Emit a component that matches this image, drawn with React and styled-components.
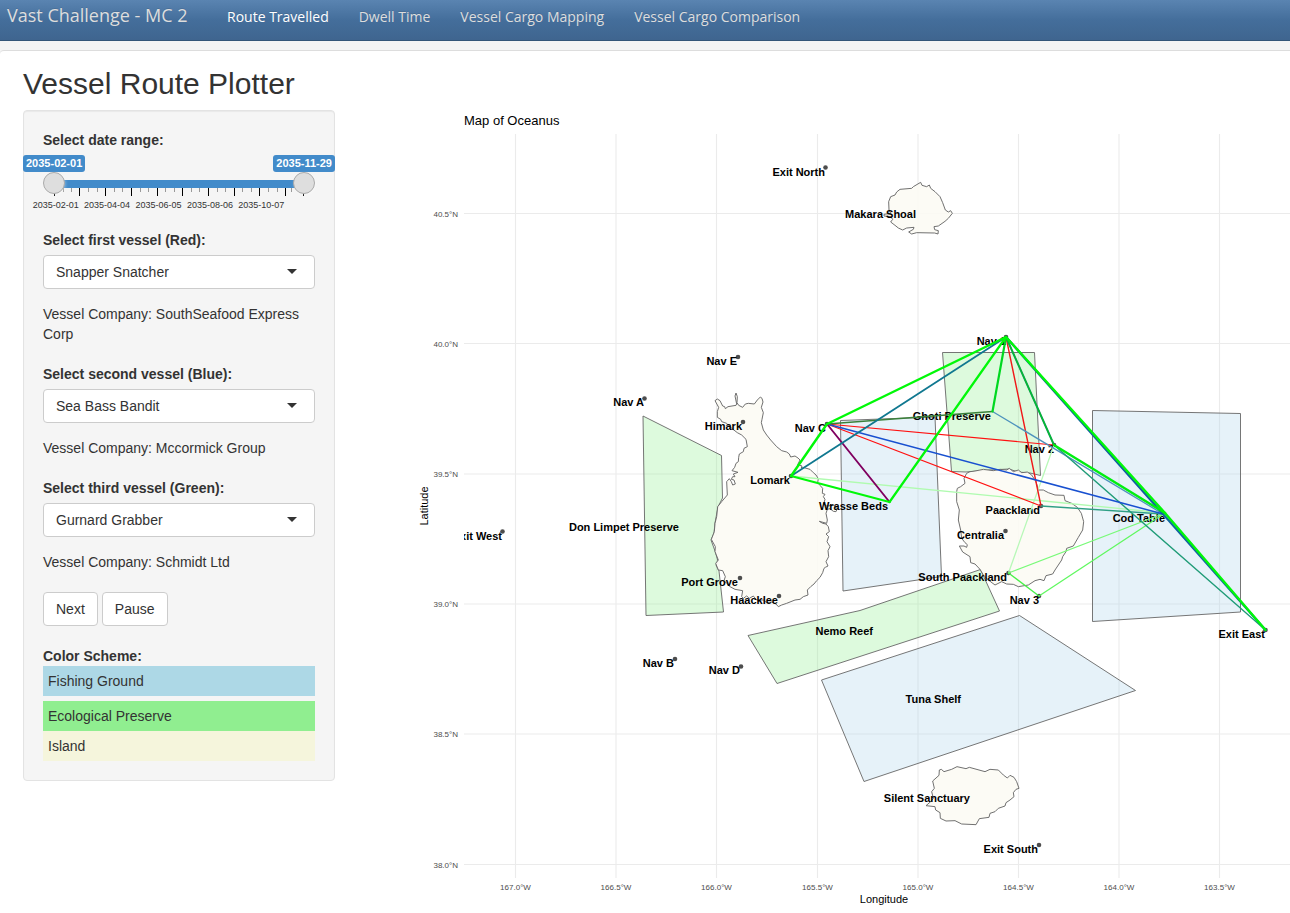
import React, { useState } from "react";
import styled, { createGlobalStyle } from "styled-components";

const GlobalStyle = createGlobalStyle`
  *, *::before, *::after { box-sizing: border-box; }
  body {
    margin: 0;
    background: #fff;
    color: #333;
    font: 14px/20px "Liberation Sans", Arial, sans-serif;
  }
`;

const NavBar = styled.nav`
  display: flex;
  height: 41px;
  padding-left: 7px;
  border-bottom: 1px solid #345578;
  background: linear-gradient(#5a84b1, #446e9b 50%, #3f658f);
  font-family: "Open Sans", sans-serif;
`;

const Brand = styled.a`
  width: 205px;
  padding-top: 5px;
  color: #ddd;
  font-size: 18px;
  text-decoration: none;
  text-shadow: 0 -1px 0 rgba(0, 0, 0, 0.1);
`;

const NavLink = styled.a`
  padding: 7px 15px 0;
  color: ${(p) => (p.$active ? "#fff" : "#ddd")};
  text-decoration: none;
  text-shadow: 0 -1px 0 rgba(0, 0, 0, 0.1);
`;

const Band = styled.div`
  height: 13px;
  margin-bottom: -4px;
  background: #f4f4f4;
`;

const Page = styled.main`
  border-top: 1px solid #ddd;
  border-top-left-radius: 4px;
  background: #fff;
  padding-left: 23px;
`;

const Title = styled.h2`
  margin: 0;
  padding: 16px 0 10px;
  font-size: 30px;
  line-height: 33px;
  font-weight: 400;
`;

const Columns = styled.div`
  display: flex;
  align-items: flex-start;
  gap: 75px;
`;

const Sidebar = styled.form`
  flex: 0 0 312px;
  padding: 19px;
  border: 1px solid #e3e3e3;
  border-radius: 4px;
  background: #f5f5f5;
  box-shadow: inset 0 1px 1px rgba(0, 0, 0, 0.05);
`;

const Label = styled.label`
  display: block;
  margin-bottom: 5px;
  font-weight: 700;
`;

const Slider = styled.fieldset`
  height: 100px;
  margin: 0;
  padding: 0;
  border: 0;
`;

const Legend = styled.legend`
  padding: 0;
  font-weight: 700;
`;

const Flags = styled.div`
  display: flex;
  justify-content: space-between;
  margin: 5px -20px 0;
`;

const Flag = styled.output`
  padding: 0 3px;
  border-radius: 3px;
  background: #428bca;
  color: #fff;
  font-size: 11px;
  font-weight: 700;
  line-height: 17px;
`;

const Track = styled.div`
  position: relative;
  height: 21px;
  background: linear-gradient(#428bca, #428bca) center 8px / calc(100% - 22px) 8px no-repeat;
`;

const Thumb = styled.input`
  position: absolute;
  inset: 0;
  width: 100%;
  height: 22px;
  margin: 0;
  appearance: none;
  background: none;
  pointer-events: none;

  &::-webkit-slider-thumb {
    appearance: none;
    width: 22px;
    height: 22px;
    border: 1px solid #aaa;
    border-radius: 50%;
    background: #dedede;
    box-shadow: 1px 1px 3px rgba(255, 255, 255, 0.3);
    pointer-events: auto;
  }
`;

const Ticks = styled.svg`
  display: block;
  width: 100%;
  height: 12px;
  margin-top: -6px;
`;

const TickLabels = styled.div`
  display: flex;
  width: 257px;
  margin: -1px 0 0 -13px;
  font-size: 9px;
  line-height: 14px;

  span {
    flex: 1;
    text-align: center;
  }
`;

const Field = styled.div`
  margin-bottom: 20px;
`;

const SelectBox = styled.div`
  position: relative;
  margin-bottom: 15px;

  &::after {
    content: "";
    position: absolute;
    top: 14px;
    right: 18px;
    border: 5px solid transparent;
    border-top-color: #333;
    border-bottom: 0;
    pointer-events: none;
  }
`;

const Select = styled.select`
  display: block;
  width: 100%;
  height: 34px;
  padding: 0 12px;
  border: 1px solid #ccc;
  border-radius: 4px;
  appearance: none;
  background: #fff;
  color: #333;
  font: inherit;
`;

const Company = styled.p`
  margin: 0;
`;

const Buttons = styled.div`
  display: flex;
  gap: 4px;
  margin-bottom: 20px;
`;

const Button = styled.button`
  height: 34px;
  padding: 0 12px;
  border: 1px solid #ccc;
  border-radius: 4px;
  background: #fff;
  color: #333;
  font: inherit;
`;

const Scheme = styled.strong`
  display: block;
`;

const Swatch = styled.div`
  padding: 5px;
  margin-bottom: ${(p) => p.$gap || 0}px;
  background: ${(p) => p.$color};
`;

const Plot = styled.svg`
  display: block;
  flex: 1;
  min-width: 0;
  font-family: "Liberation Sans", Arial, sans-serif;
`;

const AxisText = styled.text`
  font-size: 8px;
  fill: #4d4d4d;
`;

const AxisTitle = styled.text`
  font-size: 11px;
  fill: #000;
`;

const PlaceName = styled.text`
  font-size: 11px;
  font-weight: 700;
  text-anchor: end;
  fill: #000;
`;

const VESSELS = [
  { order: "first", color: "Red", name: "Snapper Snatcher", company: "SouthSeafood Express Corp" },
  { order: "second", color: "Blue", name: "Sea Bass Bandit", company: "Mccormick Group" },
  { order: "third", color: "Green", name: "Gurnard Grabber", company: "Schmidt Ltd" },
];

const TABS = ["Route Travelled", "Dwell Time", "Vessel Cargo Mapping", "Vessel Cargo Comparison"];
const DATES = ["2035-02-01", "2035-04-04", "2035-06-05", "2035-08-06", "2035-10-07"];
const MAJOR_TICKS = [11, 36, 62, 88, 114, 139, 165, 191, 216, 242, 260];
const MINOR_TICKS = [20, 28, 45, 54, 71, 79, 97, 105, 122, 131, 148, 156, 174, 182, 199, 208, 225, 234, 248];

const LONGITUDES = [
  [515.5, "167.0°W"], [616, "166.5°W"], [716.5, "166.0°W"], [817.5, "165.5°W"],
  [918, "165.0°W"], [1018.5, "164.5°W"], [1119, "164.0°W"], [1219.5, "163.5°W"],
];
const LATITUDES = [
  [213.5, "40.5°N"], [343.5, "40.0°N"], [474, "39.5°N"], [604, "39.0°N"], [734, "38.5°N"], [864.5, "38.0°N"],
];

const PRESERVES = [
  "643,416 721.5,455.5 722.5,498 718,507 715,523 714,533 711,540 715,551 718,561 716,565 719,571 723.5,612 646,615.5",
  "942.5,352.5 1034.5,352.5 1040.5,475.5 1030,473 1018,472 1009,469 990,470 966,472 951.5,471.5",
  "748,635.5 860,610.5 980.5,569.5 999.5,611 777,683.5",
];
const GROUNDS = [
  "840.5,420.5 935,417 941.5,576.5 843,591",
  "1092.5,410.5 1240.5,413.5 1240.5,612 1092.5,621.5",
  "821.5,680 1019.5,615.5 1135.5,690.5 864,781.5",
];

const ISLANDS = [
  {
    x: 600, y: 380,
    points: "345,62 352,57 360,62 368,78 374,80 376,86 384,80 408,76 410,72 405,48 408,39 412,50 411,68 416,76 428,82 436,72 445,70 463,72 472,60 481,51 486,55 489,66 484,82 490,98 486,118 484,128 490,150 500,165 512,180 530,200 545,212 560,216 568,222 572,231 585,228 594,234 600,240 593,254 606,258 604,264 612,263 630,268 640,278 648,285 655,296 653,308 660,316 668,325 667,340 675,343 670,350 675,358 671,372 680,378 700,376 712,386 708,395 700,394 690,386 682,388 678,400 682,420 680,430 658,424 668,430 678,432 685,440 688,455 678,462 686,470 681,485 690,500 684,512 686,530 678,545 684,558 676,562 672,565 668,578 660,592 650,602 642,612 632,620 622,630 624,645 610,650 600,658 585,660 560,670 545,675 535,680 528,672 515,666 500,668 490,660 470,660 460,648 448,655 440,648 430,655 425,650 428,632 405,628 390,620 380,610 372,602 376,590 368,572 355,570 347,550 355,540 345,515 346,500 334,478 343,455 345,430 350,410 353,380 365,365 382,345 380,305 388,296 394,305 398,315 406,312 402,300 394,298 398,290 405,290 400,282 414,277 396,272 404,262 408,250 415,245 416,232 418,222 430,215 432,205 442,200 438,178 425,165 412,158 395,145 380,130 365,125 362,118 352,112 352,95 356,82",
  },
  {
    x: 940, y: 460,
    points: "50,95 52,85 62,80 75,70 72,55 80,40 90,35 105,33 130,28 160,32 180,28 200,30 208,25 220,35 235,30 245,38 262,36 275,45 288,65 295,90 310,90 325,98 345,105 372,106 375,122 395,130 412,142 424,160 431,185 428,210 415,232 400,258 380,265 378,275 368,290 365,300 355,315 345,330 338,342 318,347 312,362 300,358 285,362 265,375 235,380 220,373 200,372 185,365 165,375 145,360 130,345 120,328 105,312 92,308 90,290 68,276 58,258 72,258 80,262 82,254 75,248 65,235 62,210 55,180 58,150 50,125",
  },
  {
    x: 840, y: 160,
    points: "146,125 152,110 165,105 170,96 180,88 215,85 220,80 242,67 246,76 260,80 268,75 272,85 285,95 300,110 308,128 316,150 325,156 332,152 337,160 325,175 315,184 295,198 282,200 284,209 295,212 294,222 284,219 230,218 215,222 206,216 220,208 222,202 200,204 188,210 175,204 165,196 152,186 158,178 152,170 132,168 132,163 152,160 147,150",
  },
  {
    x: 870, y: 750,
    points: "188,93 207,76 208,60 214,58 222,65 245,58 261,50 288,56 298,52 345,65 360,58 385,60 400,75 412,84 420,76 432,82 440,95 447,115 438,118 430,128 432,140 420,150 408,158 405,168 385,175 375,185 360,190 357,202 328,206 318,224 275,222 255,212 228,213 211,205 210,188 197,180 195,170 168,167 182,155 190,145 185,125 193,115",
  },
];

const PLACES = [
  ["Exit North", 825, 176, 825.5, 167.5],
  ["Makara Shoal", 916, 218],
  ["Nav E", 737, 365, 738, 357],
  ["Nav A", 644, 406, 644.5, 398.5],
  ["Himark", 742, 430, 743, 422],
  ["Nav C", 826, 432, 827, 424],
  ["Lomark", 790, 484, 791, 476],
  ["Don Limpet Preserve", 679, 531],
  ["Exit West", 502, 540, 502.5, 531.5],
  ["Port Grove", 738, 586, 740, 578],
  ["Haacklee", 778, 604, 779, 596],
  ["Wrasse Beds", 888, 510],
  ["Ghoti Preserve", 991, 420],
  ["Nav 1", 1006, 345, 1006, 337],
  ["Nav 2", 1054, 453, 1054, 445],
  ["Paackland", 1040, 514, 1041, 506],
  ["Centralia", 1004, 539, 1005.5, 531],
  ["South Paackland", 1007, 581, 1008.5, 573],
  ["Nav 3", 1039, 604, 1039, 596],
  ["Cod Table", 1165, 522],
  ["Exit East", 1265, 638, 1265.5, 630],
  ["Nemo Reef", 873, 635],
  ["Nav B", 674, 667, 675, 659],
  ["Nav D", 740, 674, 741, 666.5],
  ["Tuna Shelf", 961, 703],
  ["Silent Sanctuary", 970, 802],
  ["Exit South", 1038, 853, 1039, 845],
];

const STOPS = {
  nav1: [1006, 337], nav2: [1054, 445], nav3: [1039, 596], navC: [827, 424],
  lomark: [791, 476], wrasse: [889.5, 502], ghoti: [992.5, 411.5], paackland: [1041, 506],
  south: [1008.5, 573], cod: [1165, 513], codWest: [1163, 514], east: [1265.5, 630],
};

const ROUTES = [
  ["lomark", "cod", "#b0fbb0", 1.3],
  ["nav2", "south", "#b8f8b8", 1.3],
  ["south", "cod", "#78fa78", 1.3],
  ["nav3", "cod", "#60f860", 1.3],
  ["south", "nav3", "#48f048", 1.3],
  ["navC", "nav2", "#ff1010", 1.2],
  ["navC", "paackland", "#ff1010", 1.2],
  ["nav1", "paackland", "#f01818", 1.4],
  ["ghoti", "codWest", "#4d92bd", 1.3],
  ["paackland", "codWest", "#2f9f85", 1.4],
  ["nav2", "east", "#209c78", 1.4],
  ["navC", "codWest", "#1850d0", 1.5],
  ["navC", "wrasse", "#800060", 1.9],
  ["navC", "ghoti", "#3a803a", 1.5],
  ["lomark", "nav1", "#107890", 1.8],
  ["nav1", "codWest", "#1060a0", 2.2],
  ["codWest", "east", "#1068a0", 2.2],
  ["nav1", "nav2", "#209060", 2],
  ["nav1", "nav2", "#00c030", 1.3],
  ["nav2", "cod", "#00ee10", 2.4],
  ["nav1", "ghoti", "#00d820", 2.2],
  ["nav1", "wrasse", "#00f808", 2.2],
  ["nav1", "navC", "#00f808", 2.4],
  ["navC", "lomark", "#00f808", 2.4],
  ["lomark", "wrasse", "#00f808", 2.2],
  ["nav1", "cod", "#00f808", 2.4],
  ["cod", "east", "#00f808", 2.4],
];

function DateRange() {
  const [from, setFrom] = useState(0);
  const [to, setTo] = useState(301);
  const format = (day) => new Date(Date.UTC(2035, 1, 1 + day)).toISOString().slice(0, 10);
  return (
    <Slider>
      <Legend>Select date range:</Legend>
      <Flags>
        <Flag>{format(from)}</Flag>
        <Flag>{format(to)}</Flag>
      </Flags>
      <Track>
        <Thumb type="range" aria-label="Start date" min="0" max="301" value={from}
          onChange={(e) => setFrom(Math.min(+e.target.value, to))} />
        <Thumb type="range" aria-label="End date" min="0" max="301" value={to}
          onChange={(e) => setTo(Math.max(+e.target.value, from))} />
      </Track>
      <Ticks viewBox="0 0 272 12" preserveAspectRatio="none" aria-hidden="true">
        {MINOR_TICKS.map((x) => <rect key={x} x={x} y="1" width="1" height="4" fill="#999" />)}
        {MAJOR_TICKS.map((x) => <rect key={x} x={x} y="1" width="1" height="8" fill="#000" />)}
      </Ticks>
      <TickLabels>{DATES.map((d) => <span key={d}>{d}</span>)}</TickLabels>
    </Slider>
  );
}

function VesselField({ vessel }) {
  const id = `vessel-${vessel.order}`;
  return (
    <Field>
      <Label htmlFor={id}>{`Select ${vessel.order} vessel (${vessel.color}):`}</Label>
      <SelectBox>
        <Select id={id} defaultValue={vessel.name}>
          {VESSELS.map((v) => <option key={v.name}>{v.name}</option>)}
        </Select>
      </SelectBox>
      <Company>{`Vessel Company: ${vessel.company}`}</Company>
    </Field>
  );
}

function OceanusMap() {
  return (
    <Plot viewBox="410 110 880 803" role="img" aria-label="Map of Oceanus">
      <defs>
        <clipPath id="panel"><rect x="464" y="134" width="826" height="744" /></clipPath>
      </defs>
      <text x="464" y="125" fontSize="13">Map of Oceanus</text>
      <g stroke="#ebebeb" strokeWidth="1.1">
        {LONGITUDES.map(([x]) => <line key={x} x1={x} x2={x} y1="134" y2="878" />)}
        {LATITUDES.map(([y]) => <line key={y} x1="464" x2="1290" y1={y} y2={y} />)}
      </g>
      {LONGITUDES.map(([x, t]) => <AxisText key={t} x={x} y="890" textAnchor="middle">{t}</AxisText>)}
      {LATITUDES.map(([y, t]) => <AxisText key={t} x="458" y={y + 3} textAnchor="end">{t}</AxisText>)}
      <AxisTitle x="884" y="903" textAnchor="middle">Longitude</AxisTitle>
      <AxisTitle transform="translate(428 506) rotate(-90)" textAnchor="middle">Latitude</AxisTitle>
      <g clipPath="url(#panel)">
        <g stroke="#666" strokeWidth="0.9" strokeLinejoin="round">
          {PRESERVES.map((p) => <polygon key={p} points={p} fill="#90ee90" fillOpacity="0.3" />)}
          {GROUNDS.map((p) => <polygon key={p} points={p} fill="#add3eb" fillOpacity="0.3" />)}
          {ISLANDS.map((i) => (
            <g key={i.x} transform={`translate(${i.x} ${i.y}) scale(${1 / 3})`}>
              <polygon points={i.points} strokeWidth="2.8" fill="#fcfbf4" fillOpacity="0.9" />
            </g>
          ))}
        </g>
        {PLACES.map(([name, x, y, cx, cy]) => (
          <g key={name}>
            {cx && <circle cx={cx} cy={cy} r="2.3" fill="#4d4d4d" />}
            <PlaceName x={x} y={y}>{name}</PlaceName>
          </g>
        ))}
        {ROUTES.map(([a, b, color, width], i) => (
          <line key={i} x1={STOPS[a][0]} y1={STOPS[a][1]} x2={STOPS[b][0]} y2={STOPS[b][1]}
            stroke={color} strokeWidth={width} strokeLinecap="round" />
        ))}
      </g>
    </Plot>
  );
}

export default function App() {
  return (
    <>
      <GlobalStyle />
      <NavBar>
        <Brand href="#">Vast Challenge - MC 2</Brand>
        {TABS.map((t, i) => <NavLink key={t} href="#" $active={i === 0}>{t}</NavLink>)}
      </NavBar>
      <Band />
      <Page>
        <Title>Vessel Route Plotter</Title>
        <Columns>
          <Sidebar>
            <DateRange />
            {VESSELS.map((v) => <VesselField key={v.order} vessel={v} />)}
            <Buttons>
              <Button type="button">Next</Button>
              <Button type="button">Pause</Button>
            </Buttons>
            <Scheme>Color Scheme:</Scheme>
            <Swatch $color="lightblue" $gap={5}>Fishing Ground</Swatch>
            <Swatch $color="lightgreen">Ecological Preserve</Swatch>
            <Swatch $color="beige">Island</Swatch>
          </Sidebar>
          <OceanusMap />
        </Columns>
      </Page>
    </>
  );
}
